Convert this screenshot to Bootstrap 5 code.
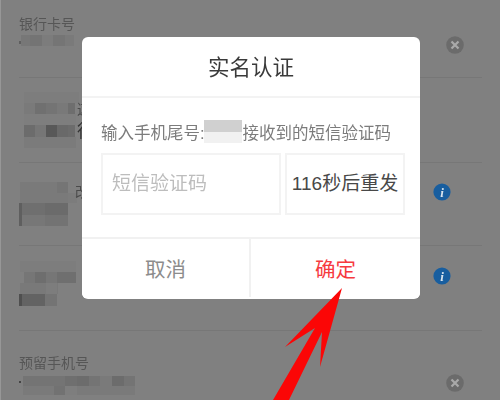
<!DOCTYPE html>
<html lang="zh">
<head>
<meta charset="utf-8">
<title>实名认证</title>
<link href="https://cdn.jsdelivr.net/npm/bootstrap@5.3.0/dist/css/bootstrap.min.css" rel="stylesheet">
<style>
html,body{margin:0;height:400px;overflow:hidden}
body{background:#808080;font-family:"Liberation Sans","Noto Sans CJK SC",sans-serif;color:#555;position:relative;border-left:1px solid #979797}
.page-list{padding:0 18px;filter:blur(.35px)}
.bank-row{border-bottom:1px solid #777;position:relative;display:flex;justify-content:space-between;align-items:flex-start}
.h1r{height:78px;padding-top:14px}.h2r{height:85px}.h3r{height:83px}.h4r{height:85px}.h5r{height:70px;border-bottom:0}
.row-label{font-size:14px;line-height:20px;color:#565656}
.label-bottom{margin-top:22px}
.svg-block{display:block}
.side-ico{display:block}
.mos-1{margin-top:1px}
.mos-2{margin-top:12px}
.mos-3{margin-top:19px}
.mos-4{margin-top:15px}
.mos-5{margin-top:3px}
.ico-1{margin:22px 18px 0 0}
.ico-3{margin:20px 31px 0 0}
.ico-4{margin:21px 31px 0 0}
.ico-5{margin:43px 18px 0 0}
.verify-box{position:absolute;left:81px;top:37px;width:338px;height:262px;border:0;border-radius:6px;background:#fff;z-index:5;overflow:hidden;filter:blur(.3px)}
.verify-title{height:61px;font-size:21.5px;color:#3a3a3a;border-bottom:2px solid #f3f3f3;display:flex;align-items:center;justify-content:center;padding-top:3px}
.verify-body{height:141px;padding:21px 15px 0 19px;border-bottom:2px solid #f1f1f1}
.hint-line{font-size:16.5px;line-height:28px;height:34px;color:#7c7c7c;white-space:nowrap;display:flex;align-items:flex-start}
.hint-line svg{flex:none;margin-top:1px;margin-left:-3px}
.code-input.form-control{width:180px;height:62px;border:2px solid #f3f3f3;border-radius:0;font-size:19px;padding:0 0 0 9px;color:#444;font-family:inherit;box-shadow:none;flex:none}
.code-input.form-control::placeholder{color:#bdbdbd;opacity:1}
.resend-btn.btn{width:120px;height:62px;border:2px solid #f3f3f3;border-radius:0;font-size:19px;padding:0;color:#484848;background:#fff;white-space:nowrap;flex:none}
.foot-btn.btn{flex:1 1 50%;height:58px;border:0;border-radius:0;font-size:20.5px;padding:4px 0 0;background:#fff}
.foot-cancel.btn{color:#8c8c8c;border-right:2px solid #f1f1f1}
.foot-ok.btn{color:#f63a3f}
.arrow-over{position:absolute;left:0;top:0;z-index:6;pointer-events:none;filter:blur(.3px)}
</style>
</head>
<body>
<div class="page-list">
  <div class="bank-row h1r">
    <div>
      <div class="row-label">银行卡号</div>
      <svg class="svg-block mos-1" width="60" height="16"><g>
        <rect x="0" y="6" width="2" height="3" fill="#5f5f5f"/><rect x="2" y="0" width="9" height="11" fill="#777"/><rect x="11" y="0" width="12" height="11" fill="#747474"/><rect x="23" y="0" width="11" height="11" fill="#7c7c7c"/><rect x="34" y="0" width="12" height="11" fill="#757575"/><rect x="46" y="0" width="9" height="11" fill="#7a7a7a"/></g></svg>
    </div>
    <svg class="side-ico ico-1" width="18" height="18" viewBox="0 0 18 18"><circle cx="9" cy="9" r="8.8" fill="#6b6b6b"/><path d="M5.5 5.5l7 7M12.5 5.5l-7 7" stroke="#a9a9a9" stroke-width="2.2"/></svg>
  </div>
  <div class="bank-row h2r">
    <svg class="svg-block mos-2" width="90" height="72"><g>
      <rect x="5" y="2" width="55" height="11" fill="#7d7d7d"/>
      <rect x="5" y="13" width="11" height="11" fill="#7a7a7a"/><rect x="16" y="13" width="11" height="11" fill="#707070"/><rect x="27" y="13" width="11" height="11" fill="#747474"/><rect x="38" y="13" width="11" height="11" fill="#797979"/><rect x="49" y="13" width="7" height="11" fill="#6e6e6e"/>
      <rect x="5" y="24" width="52" height="11" fill="#7e7e7e"/>
      <rect x="5" y="35" width="11" height="12" fill="#6c6c6c"/><rect x="16" y="35" width="11" height="12" fill="#767676"/><rect x="27" y="35" width="11" height="12" fill="#585858"/><rect x="38" y="35" width="11" height="12" fill="#696969"/><rect x="49" y="35" width="7" height="12" fill="#6c6c6c"/>
      <rect x="5" y="47" width="52" height="11" fill="#7b7b7b"/>
      <text x="58" y="24" font-size="14" fill="#4a4a4a">这</text><text x="58" y="47" font-size="17" fill="#333">行</text>
    </g></svg>
  </div>
  <div class="bank-row h3r">
    <svg class="svg-block mos-3" width="90" height="66"><g>
      <rect x="1" y="0" width="48" height="21" fill="#7a7a7a"/><rect x="38" y="0" width="11" height="11" fill="#757575"/><rect x="49" y="11" width="9" height="10" fill="#7c7c7c"/>
      <rect x="1" y="21" width="48" height="12" fill="#6f6f6f"/><rect x="26" y="21" width="23" height="12" fill="#6b6b6b"/>
      <rect x="1" y="33" width="48" height="11" fill="#777"/><rect x="26" y="33" width="23" height="11" fill="#737373"/>
      <rect x="0" y="21" width="3" height="23" fill="#5f5f5f"/>
      <text x="56" y="15" font-size="14" fill="#4a4a4a">改</text>
    </g></svg>
    <svg class="side-ico ico-3" width="18" height="18" viewBox="0 0 18 18"><circle cx="9" cy="9" r="8.6" fill="#185e9f"/><text x="9" y="13.5" text-anchor="middle" font-size="13" font-weight="700" font-style="italic" font-family="Liberation Serif,serif" fill="#d8e4ee">i</text></svg>
  </div>
  <div class="bank-row h4r">
    <svg class="svg-block mos-4" width="62" height="62"><g>
      <rect x="1" y="0" width="56" height="11" fill="#7d7d7d"/>
      <rect x="5" y="11" width="11" height="11" fill="#767676"/><rect x="16" y="11" width="11" height="11" fill="#6e6e6e"/><rect x="27" y="11" width="11" height="11" fill="#767676"/><rect x="38" y="11" width="19" height="11" fill="#6f6f6f"/>
      <rect x="1" y="22" width="38" height="11" fill="#797979"/><rect x="27" y="22" width="11" height="11" fill="#7d7d7d"/>
      <rect x="1" y="33" width="25" height="12" fill="#636363"/><rect x="26" y="33" width="12" height="12" fill="#747474"/><rect x="0" y="33" width="3" height="12" fill="#4f4f4f"/>
    </g></svg>
    <svg class="side-ico ico-4" width="18" height="18" viewBox="0 0 18 18"><circle cx="9" cy="9" r="8.6" fill="#185e9f"/><text x="9" y="13.5" text-anchor="middle" font-size="13" font-weight="700" font-style="italic" font-family="Liberation Serif,serif" fill="#d8e4ee">i</text></svg>
  </div>
  <div class="bank-row h5r">
    <div>
      <div class="row-label label-bottom">预留手机号</div>
      <svg class="svg-block mos-5" width="120" height="20"><g>
        <rect x="0" y="5" width="2" height="2" fill="#444"/>
        <rect x="4" y="0" width="112" height="10" fill="#747474"/><rect x="46" y="0" width="12" height="10" fill="#6f6f6f"/><rect x="58" y="0" width="12" height="10" fill="#6c6c6c"/><rect x="81" y="0" width="12" height="10" fill="#7a7a7a"/><rect x="93" y="0" width="12" height="10" fill="#6c6c6c"/>
        <rect x="4" y="10" width="112" height="9" fill="#7a7a7a"/><rect x="35" y="10" width="11" height="9" fill="#727272"/><rect x="46" y="10" width="12" height="9" fill="#7e7e7e"/>
      </g></svg>
    </div>
    <svg class="side-ico ico-5" width="18" height="18" viewBox="0 0 18 18"><circle cx="9" cy="9" r="8.8" fill="#6b6b6b"/><path d="M5.5 5.5l7 7M12.5 5.5l-7 7" stroke="#a9a9a9" stroke-width="2.2"/></svg>
  </div>
</div>

<div class="verify-box card">
  <div class="verify-title">实名认证</div>
  <div class="verify-body">
    <div class="hint-line">输入手机尾号:<svg width="41" height="24"><rect x="2" y="0" width="38" height="12" fill="#d0d0d0"/><rect x="2" y="12" width="38" height="11" fill="#f1f1f1"/></svg>接收到的短信验证码</div>
    <div class="d-flex gap-1">
      <input class="code-input form-control" type="text" placeholder="短信验证码">
      <button class="resend-btn btn" type="button">116秒后重发</button>
    </div>
  </div>
  <div class="d-flex">
    <button class="foot-btn foot-cancel btn" type="button">取消</button>
    <button class="foot-btn foot-ok btn" type="button">确定</button>
  </div>
</div>

<svg class="arrow-over" width="500" height="400" viewBox="0 0 500 400"><polygon points="341,288 284,347 314,328 272,400 288,400 321,332 319,367" fill="#fb0606"/></svg>
</body>
</html>
